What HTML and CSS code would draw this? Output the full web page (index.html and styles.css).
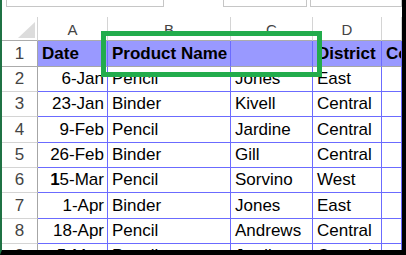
FILE: index.html
```html
<!DOCTYPE html>
<html>
<head>
<meta charset="utf-8">
<link rel="stylesheet" href="styles.css">
</head>
<body>
<div class="screen">
  <div class="topbar">
    <div class="box box-name"></div>
    <div class="box box-mid"></div>
    <div class="box box-formula"></div>
  </div>
  <div class="sheet">
    <div class="hd corner"><svg class="tri" width="17" height="16" viewBox="0 0 17 16"><polygon points="17,0 17,16 0,16" fill="#dcdcdc"/></svg></div>
    <div class="hd">A</div>
    <div class="hd">B</div>
    <div class="hd">C</div>
    <div class="hd">D</div>
    <div class="hd"></div>

    <div class="rn r1">1</div>
    <div class="c r1 b">Date</div>
    <div class="c r1 b">Product Name</div>
    <div class="c r1 b"></div>
    <div class="c r1 b">District</div>
    <div class="c r1 b">Co</div>

    <div class="rn">2</div>
    <div class="c num">6-Jan</div>
    <div class="c">Pencil</div>
    <div class="c">Jones</div>
    <div class="c">East</div>
    <div class="c"></div>

    <div class="rn">3</div>
    <div class="c num">23-Jan</div>
    <div class="c">Binder</div>
    <div class="c">Kivell</div>
    <div class="c">Central</div>
    <div class="c"></div>

    <div class="rn tall">4</div>
    <div class="c num tall">9-Feb</div>
    <div class="c tall">Pencil</div>
    <div class="c tall">Jardine</div>
    <div class="c tall">Central</div>
    <div class="c tall"></div>

    <div class="rn">5</div>
    <div class="c num">26-Feb</div>
    <div class="c">Binder</div>
    <div class="c">Gill</div>
    <div class="c">Central</div>
    <div class="c"></div>

    <div class="rn">6</div>
    <div class="c num"><span class="heavy">1</span>5-Mar</div>
    <div class="c">Pencil</div>
    <div class="c">Sorvino</div>
    <div class="c">West</div>
    <div class="c"></div>

    <div class="rn tall">7</div>
    <div class="c num tall">1-Apr</div>
    <div class="c tall">Binder</div>
    <div class="c tall">Jones</div>
    <div class="c tall">East</div>
    <div class="c tall"></div>

    <div class="rn">8</div>
    <div class="c num">18-Apr</div>
    <div class="c">Pencil</div>
    <div class="c">Andrews</div>
    <div class="c">Central</div>
    <div class="c"></div>

    <div class="rn">9</div>
    <div class="c num">5-May</div>
    <div class="c">Pencil</div>
    <div class="c">Jardine</div>
    <div class="c">Central</div>
    <div class="c"></div>
  </div>
  <div class="highlight"></div>
</div>
</body>
</html>
```
FILE: styles.css
```css
* { box-sizing: border-box; }
html, body { margin: 0; padding: 0; background: #fff; }

.screen {
  position: relative;
  width: 406px;
  height: 255px;
  overflow: hidden;
  border-left: 2px solid #1f7244;
  border-right: 4px solid #000;
  border-bottom: 5px solid #000;
  background: #fff;
  font-family: "Liberation Sans", Arial, sans-serif;
}

.topbar {
  height: 17px;
  display: flex;
  align-items: flex-start;
  background: #fff;
}
.box {
  height: 7px;
  border: 1px solid #c6c6c6;
  border-top: none;
  background: #fff;
}
.box-name { margin-left: 4px; width: 158px; }
.box-mid { margin-left: 59px; width: 84px; }
.box-formula { margin-left: 3px; flex: 1; }

.sheet {
  display: grid;
  grid-template-columns: 36px 70px 123px 82px 69px 1fr;
  grid-template-rows: 24px 26px 25px 25px 26px 25px 25px 26px 25px 25px;
  font-size: 17px;
  color: #000;
}

.hd {
  border-right: 1px solid #d4d4d4;
  border-bottom: 1px solid #ababab;
  color: #444;
  font-size: 15px;
  text-align: center;
  line-height: 25px;
  background: #fff;
}
.corner {
  display: flex;
  align-items: flex-end;
  justify-content: flex-end;
  padding: 0 2px 2px 0;
}
.tri { display: block; }

.rn {
  border-right: 1px solid #a6a6a6;
  border-bottom: 1px solid #d4d4d4;
  color: #444;
  text-align: center;
  line-height: 24px;
}
.rn.r1 { line-height: 25px; border-bottom-color: #ababab; }

.c {
  border-right: 1px solid #6b6bff;
  border-bottom: 1px solid #6b6bff;
  padding: 0 3px 0 4px;
  line-height: 24px;
  white-space: nowrap;
  overflow: hidden;
}
.tall { line-height: 25px; }
.c.r1 {
  background: #9999ff;
  line-height: 25px;
  border-bottom-color: #a6a6a6;
}
.c.b { font-weight: bold; }
.c.num { text-align: right; }
.heavy { font-weight: bold; }

.highlight {
  position: absolute;
  left: 99px;
  top: 31px;
  width: 221px;
  height: 46px;
  border: 5px solid #22ac4c;
}
```
